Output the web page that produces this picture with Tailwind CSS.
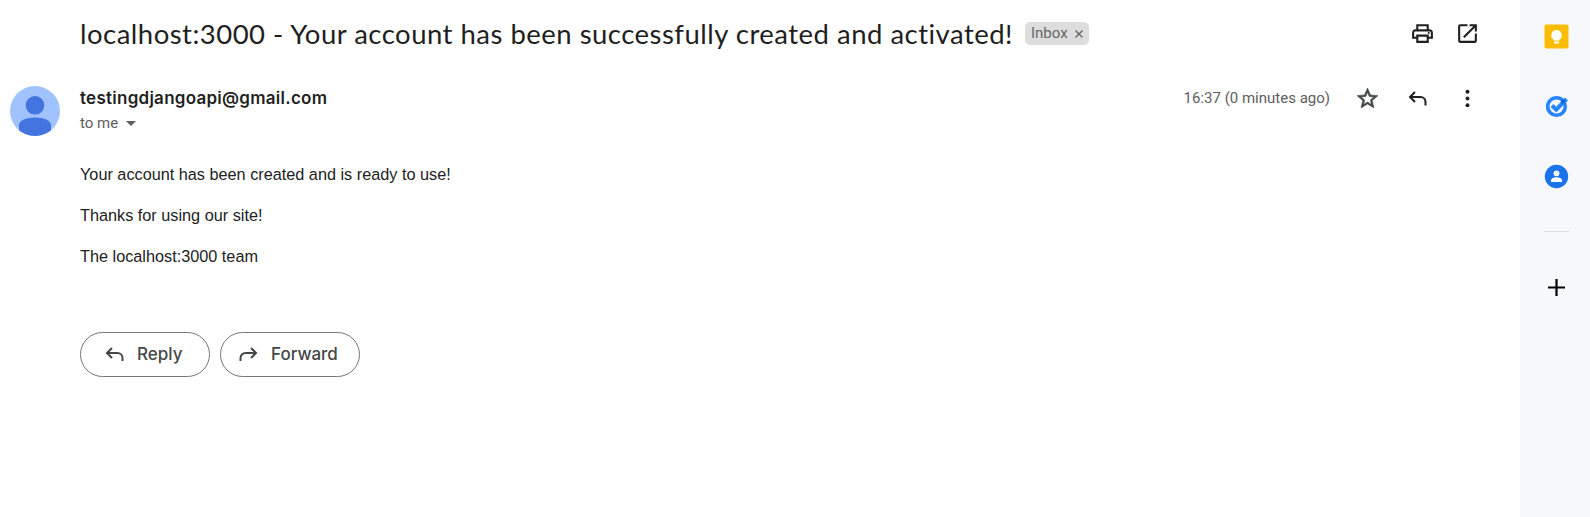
<!DOCTYPE html>
<html lang="en">
<head>
<meta charset="utf-8">
<title>Inbox</title>
<script src="https://cdn.jsdelivr.net/npm/@tailwindcss/browser@4"></script>
</head>
<body class="flex h-[517px] w-[1590px] overflow-hidden bg-white font-['Roboto',sans-serif] text-[#1f1f1f]">
<main class="w-[1520px] shrink-0">
  <header class="flex h-[67px] items-center pl-20 pr-10">
    <h1 class="whitespace-nowrap font-['Lato',sans-serif] text-[27.5px] leading-[34px] tracking-[0.485px]">localhost:3000 - Your account has been successfully created and activated!</h1>
    <div class="ml-[12px] flex h-[23px] w-[64px] items-center justify-between rounded-[5px] bg-[#ddd] px-[6px] text-[15px] text-[#666]"><span>Inbox</span>
      <svg class="size-[8px]" viewBox="0 0 8 8" stroke="#666" stroke-width="1.4"><path d="M.5.5l7 7M7.5.5l-7 7"/></svg></div>
    <svg class="ml-auto size-[25px]" viewBox="0 0 24 24" fill="#1f1f1f"><path d="M19 8h-1V3H6v5H5c-1.660 0-3 1.340-3 3v6h4v4h12v-4h4v-6c0-1.660-1.340-3-3-3zM8 5h8v3H8V5zm8 12v2H8v-4h8v2zm2-2v-2H6v2H4v-4c0-.55.45-1 1-1h14c.55 0 1 .45 1 1v4h-2z"/><circle cx="18" cy="11.500" r="1"/></svg>
    <svg class="ml-5 size-[25px]" viewBox="0 0 24 24" fill="#1f1f1f"><path d="M19 19H5V5h7V3H5c-1.110 0-2 .9-2 2v14c0 1.100.89 2 2 2h14c1.100 0 2-.9 2-2v-7h-2v7zM14 3v2h3.590l-9.830 9.830 1.410 1.410L19 6.410V10h2V3h-7z"/></svg>
  </header>
  <section class="flex h-[84px] pl-[10px] pr-[40px] pt-[19px]">
    <svg class="size-[50px] shrink-0" viewBox="0 0 50 50"><defs><clipPath id="c"><circle cx="25" cy="25" r="25"/></clipPath></defs><g clip-path="url(#c)"><path fill="#a0c3ff" d="M0 0h50v50H0z"/><g fill="#4374e0"><circle cx="25" cy="19.300" r="9.300"/><path d="M9 50V39c0-4.500 7-7.500 16-7.500s16 3 16 7.500v11z"/></g></g></svg>
    <div class="ml-5">
      <div class="h-6 font-['Inter',sans-serif] text-[17px] font-semibold leading-6 tracking-[0.26px]"><span>testingdjangoapi@gmail.com</span></div>
      <div class="flex h-[26px] items-center text-[15px] leading-[26px] text-[#5e5e5e]"><span>to me</span><svg class="ml-[8px] h-[5px] w-[10px]" viewBox="0 0 10 5"><path fill="#5e5e5e" d="M0 0h10L5 5z"/></svg></div>
    </div>
    <div class="ml-auto flex h-[25px] items-center text-[15px] text-[#5e5e5e]"><span>16:37 (0 minutes ago)</span>
      <svg class="ml-[25px] size-[25px]" viewBox="0 0 24 24" fill="#444746" stroke="#444746" stroke-width=".6"><path d="M22 9.240l-7.190-.62L12 2 9.190 8.630 2 9.240l5.460 4.730L5.820 21 12 17.270 18.180 21l-1.630-7.030L22 9.240zM12 15.400l-3.760 2.270 1-4.280-3.320-2.880 4.380-.38L12 6.100l1.710 4.040 4.380.38-3.320 2.880 1 4.280L12 15.400z"/></svg>
      <svg class="ml-[28px] h-[17px] w-[20px]" viewBox="0 0 20 17" fill="none" stroke="#1f1f1f" stroke-width="2"><path d="M7 2L2 7l5 5M2 7h10.500a5 5 0 0 1 5 5v3.500"/></svg>
      <svg class="ml-[27px] size-[25px]" viewBox="0 0 24 24" fill="#1f1f1f"><circle cx="12" cy="5.500" r="1.900"/><circle cx="12" cy="12" r="1.900"/><circle cx="12" cy="18.500" r="1.900"/></svg>
    </div>
  </section>
  <article class="flex flex-col gap-5 pl-20 pt-[13px] font-['Liberation_Sans',sans-serif] text-[16.250px] leading-[21px] text-[#222]">
    <p><span>Your account has been created and is ready to use!</span></p>
    <p><span>Thanks for using our site!</span></p>
    <p><span>The localhost:3000 team</span></p>
  </article>
  <div class="mt-[65px] flex gap-[10px] pl-20 font-['Inter',sans-serif] text-[17px] font-medium text-[#444746]">
    <div class="flex h-[45px] w-[130px] items-center rounded-full border border-[#747775] pl-6"><svg class="h-[15px] w-[20px]" viewBox="0 0 20 15" fill="none" stroke="#444746" stroke-width="2"><path d="M7 1L2 6l5 5M2 6h10.500a5 5 0 0 1 5 5v3"/></svg><span class="ml-3">Reply</span></div>
    <div class="flex h-[45px] w-[140px] items-center rounded-full border border-[#747775] pl-[17px]"><svg class="h-[15px] w-[20px]" viewBox="0 0 20 15" fill="none" stroke="#444746" stroke-width="2"><path d="M13 1l5 5-5 5M18 6H7.500a5 5 0 0 0-5 5v3"/></svg><span class="ml-[13px]">Forward</span></div>
  </div>
</main>
<aside class="flex w-[70px] flex-col items-center bg-[#f6f8fc] pl-[3px] pt-6">
  <svg class="size-[25px]" viewBox="0 0 25 25"><rect x=".5" y=".5" width="24" height="24" rx="2" fill="#fbbc04"/><g fill="#fff"><path d="M12.500 6a5.300 5.300 0 0 0-3 9.600v1h6v-1a5.300 5.300 0 0 0-3-9.600z"/><path d="M10 17.500h5v2h-5z"/></g></svg>
  <svg class="mt-[45px] size-[25px]" viewBox="0 0 25 25" fill="none"><circle cx="12.500" cy="12.500" r="8.800" stroke="#2684fc" stroke-width="3.600"/><path d="M8 11.500l4.200 4.200L22.500 5" stroke="#2684fc" stroke-width="4"/><circle cx="19" cy="7.500" r="2" fill="#0066da"/></svg>
  <svg class="mt-[45px] size-[25px]" viewBox="0 0 25 25"><circle cx="12.500" cy="12.500" r="11.700" fill="#1a73e8"/><g fill="#fff"><circle cx="12.500" cy="9.300" r="2.900"/><path d="M7 18v-1.500c0-2 3-3.200 5.500-3.200s5.500 1.200 5.500 3.200V18z"/></g></svg>
  <div class="mt-[42px] h-px w-[25px] bg-[#dadce0]"></div>
  <svg class="mt-[47px] size-[17px]" viewBox="0 0 17 17" stroke="#000" stroke-width="2.200"><path d="M8.500 0v17M0 8.500h17"/></svg>
</aside>
</body>
</html>
